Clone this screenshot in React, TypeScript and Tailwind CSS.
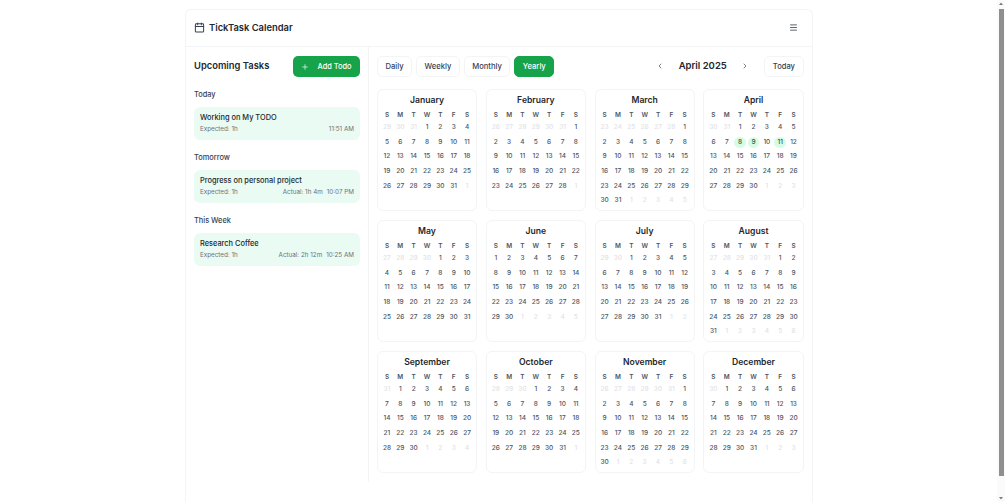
import React from 'react'
import { Calendar, ChevronLeft, ChevronRight, Menu, Plus } from 'lucide-react'
import { clsx } from 'clsx'

const MONTHS = ['January', 'February', 'March', 'April', 'May', 'June', 'July', 'August', 'September', 'October', 'November', 'December']
const WEEKDAYS = ['S', 'M', 'T', 'W', 'T', 'F', 'S']
const MARKED = [8, 9, 11]

const buildDays = (month: number) => {
  const first = new Date(2025, month, 1).getDay()
  const total = new Date(2025, month + 1, 0).getDate()
  const prevTotal = new Date(2025, month, 0).getDate()
  const days: { day: number; current: boolean }[] = []
  for (let i = first - 1; i >= 0; i--) days.push({ day: prevTotal - i, current: false })
  for (let d = 1; d <= total; d++) days.push({ day: d, current: true })
  const rest = (7 - (days.length % 7)) % 7
  for (let d = 1; d <= rest; d++) days.push({ day: d, current: false })
  return days
}

const MonthCard = ({ month }: { month: number }) => (
  <div className="h-[122px] rounded-[6px] border border-[#f3f4f6] bg-white px-[2.3px] pt-[3.5px]">
    <div className="h-[12px] text-center text-[8.6px] font-semibold leading-[12px] text-[#23272e]">{MONTHS[month]}</div>
    <div className="mt-[4px] grid grid-cols-7">
      {WEEKDAYS.map((w, i) => (
        <div key={i} className="h-[10px] text-center text-[6.4px] font-semibold leading-[10px] text-[#4b5563]">{w}</div>
      ))}
    </div>
    <div className="grid grid-cols-7 pt-[1px]">
      {buildDays(month).map((d, i) => {
        const marked = month === 3 && d.current && MARKED.includes(d.day)
        return (
          <div key={i} className="flex h-[14.67px] items-center justify-center">
            <span
              className={clsx(
                'flex h-[11.5px] w-[11.5px] items-center justify-center whitespace-nowrap rounded-full text-[6.5px] font-medium',
                d.current ? 'text-[#4b5563]' : 'text-[#dfe2e6]',
                marked && 'bg-[#d8fbe6] text-[#166534]'
              )}
            >
              {d.day}
            </span>
          </div>
        )
      })}
    </div>
  </div>
)

const TaskCard = ({ title, actual, time }: { title: string; actual?: string; time: string }) => (
  <div className="h-[33.5px] rounded-[6px] bg-[#e9fbf3] px-[6px] pt-[5.5px]">
    <div className="text-[7.4px] font-medium leading-[11px] text-[#23272e]">{title}</div>
    <div className="mt-[1px] flex justify-between text-[6.3px] leading-[10px] text-[#6b7280]">
      <span>Expected: 1h</span>
      <span className="flex gap-[4px]">
        {actual && <span>Actual: {actual}</span>}
        <span>{time}</span>
      </span>
    </div>
  </div>
)

const ViewButton = ({ label, active }: { label: string; active?: boolean }) => (
  <button
    className={clsx(
      'flex h-[21px] items-center rounded-[5px] border px-[7.5px] pt-[1px] text-[7.6px] font-medium',
      active ? 'border-[#16a34a] bg-[#16a34a] text-white' : 'border-[#f3f4f6] bg-white text-[#374151]'
    )}
  >
    {label}
  </button>
)

export default function App() {
  return (
    <div className="flex h-[502px] overflow-hidden bg-white font-['Inter',sans-serif]">
      <main className="flex min-w-0 flex-1 justify-start pl-[185px] pt-[8.5px]">
        <div className="h-[520px] w-[628px] rounded-t-[6px] border border-b-0 border-[#f3f4f6] bg-white">
          <header className="flex h-[37.5px] items-center justify-between border-b border-[#f3f4f6] pl-[8px] pr-[14px]">
            <div className="flex items-center gap-[4px]">
              <Calendar size={11} strokeWidth={2.2} className="text-[#374151]" />
              <h1 className="text-[9.4px] font-semibold text-[#23272e]">TickTask Calendar</h1>
            </div>
            <Menu size={9} strokeWidth={2.4} className="text-[#4b5563]" />
          </header>

          <div className="flex">
            <aside className="h-[435px] w-[183px] shrink-0 border-r border-[#f3f4f6] px-[8px] pt-[8.5px]">
              <div className="flex h-[21px] items-center justify-between">
                <h2 className="pt-[1px] text-[9.4px] font-semibold text-[#23272e]">Upcoming Tasks</h2>
                <button className="flex h-[21px] w-[67px] items-center justify-center gap-[8px] rounded-[5px] bg-[#16a34a] pt-[1px] text-[7.4px] font-medium text-white">
                  <Plus size={8} strokeWidth={2} />
                  Add Todo
                </button>
              </div>
              <section className="mt-[12px]">
                <h3 className="text-[7.4px] font-medium leading-[12px] text-[#374151]">Today</h3>
                <div className="mt-[6px]">
                  <TaskCard title="Working on My TODO" time="11:51 AM" />
                </div>
              </section>
              <section className="mt-[11.5px]">
                <h3 className="text-[7.4px] font-medium leading-[12px] text-[#374151]">Tomorrow</h3>
                <div className="mt-[6px]">
                  <TaskCard title="Progress on personal project" actual="1h 4m" time="10:07 PM" />
                </div>
              </section>
              <section className="mt-[11.5px]">
                <h3 className="text-[7.4px] font-medium leading-[12px] text-[#374151]">This Week</h3>
                <div className="mt-[6px]">
                  <TaskCard title="Research Coffee" actual="2h 12m" time="10:25 AM" />
                </div>
              </section>
            </aside>

            <section className="min-w-0 flex-1 pl-[8px] pr-[8.5px] pt-[8.5px]">
              <div className="flex h-[21px] items-center justify-between">
                <div className="flex gap-[4px]">
                  <ViewButton label="Daily" />
                  <ViewButton label="Weekly" />
                  <ViewButton label="Monthly" />
                  <ViewButton label="Yearly" active />
                </div>
                <div className="flex items-center">
                  <ChevronLeft size={8} strokeWidth={2.2} className="text-[#4b5563]" />
                  <span className="ml-[15px] mr-[14.5px] pt-[1px] text-[9.5px] font-semibold text-[#23272e]">April 2025</span>
                  <ChevronRight size={8} strokeWidth={2.2} className="text-[#4b5563]" />
                  <div className="ml-[15px]">
                    <ViewButton label="Today" />
                  </div>
                </div>
              </div>
              <div className="mt-[12.5px] grid grid-cols-4 gap-x-[8.8px] gap-y-[9px]">
                {MONTHS.map((_, m) => (
                  <MonthCard key={m} month={m} />
                ))}
              </div>
            </section>
          </div>
        </div>
      </main>

      {/* scrollbar */}
      <div className="flex w-[8px] shrink-0 flex-col items-center bg-[#fbfbfb]">
        <svg width="6" height="6" viewBox="0 0 6 6" className="mt-[1px] shrink-0">
          <path d="M3 1.5 5 4H1z" fill="#7a7a7a" />
        </svg>
        <div className="mt-[2px] h-[467px] w-[5px] shrink-0 bg-[#8f8f8f]" />
        <div className="flex-1" />
        <svg width="6" height="6" viewBox="0 0 6 6" className="mb-[1px] shrink-0">
          <path d="M3 4.5 5 2H1z" fill="#7a7a7a" />
        </svg>
      </div>
    </div>
  )
}
